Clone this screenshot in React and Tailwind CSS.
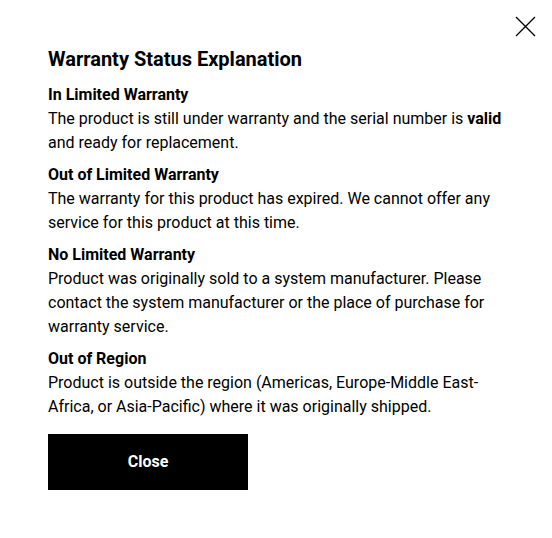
import React from 'react';

const sections = [
  {
    title: 'In Limited Warranty',
    body: (
      <>
        The product is still under warranty and the serial number is <span className="font-bold">valid</span> and ready for replacement.
      </>
    ),
  },
  {
    title: 'Out of Limited Warranty',
    body: 'The warranty for this product has expired. We cannot offer any service for this product at this time.',
  },
  {
    title: 'No Limited Warranty',
    body: 'Product was originally sold to a system manufacturer. Please contact the system manufacturer or the place of purchase for warranty service.',
  },
  {
    title: 'Out of Region',
    body: 'Product is outside the region (Americas, Europe-Middle East-Africa, or Asia-Pacific) where it was originally shipped.',
  },
];

const App = () => {
  return (
    <div className="relative w-[552px] h-[538px] bg-white text-black font-['Roboto',sans-serif]">
      <button className="absolute top-[16px] left-[515px] w-[21px] h-[21px]">
        <svg width="21" height="21" viewBox="0 0 21 21" fill="none" stroke="#000" strokeWidth="1.3">
          <path d="M1 1L20 20M20 1L1 20" />
        </svg>
      </button>

      <div className="px-12 pt-[44px]">
        <h2 className="text-[20px] leading-[30px] font-bold mb-[9px]">Warranty Status Explanation</h2>

        {sections.map((s) => (
          <div key={s.title} className="mb-2 text-[16px] leading-6">
            <h3 className="font-bold">{s.title}</h3>
            <p>{s.body}</p>
          </div>
        ))}

        <button className="mt-[7px] w-[200px] h-14 bg-black text-white font-bold text-[16px]">
          Close
        </button>
      </div>
    </div>
  );
};

export default App;
